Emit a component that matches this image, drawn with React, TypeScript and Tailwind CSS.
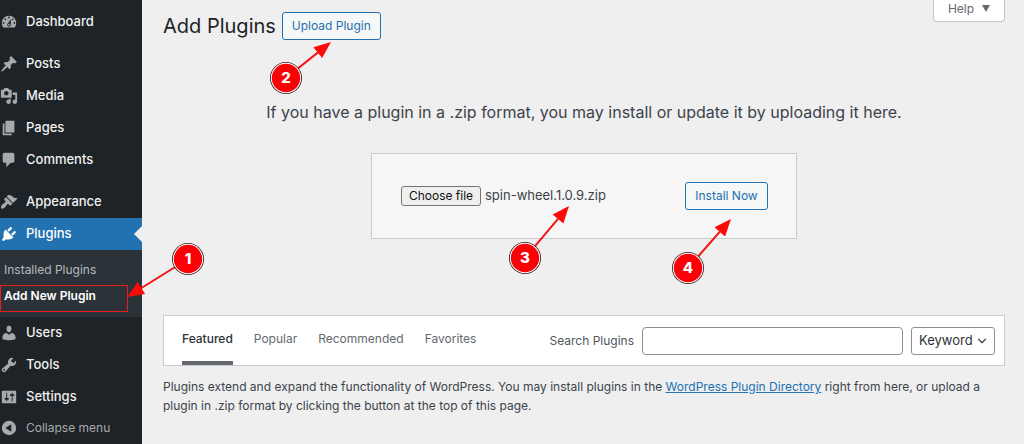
import React, { useRef, useState } from 'react';
import { ChevronDown } from 'lucide-react';

const ICONS = {
  dashboard: 'M3.76 16h12.48c1.1-1.37 1.76-3.11 1.76-5 0-4.42-3.58-8-8-8s-8 3.58-8 8c0 1.89.66 3.63 1.76 5zM10 4c.55 0 1 .45 1 1s-.45 1-1 1-1-.45-1-1 .45-1 1-1zM6 6c.55 0 1 .45 1 1s-.45 1-1 1-1-.45-1-1 .45-1 1-1zm8 0c.55 0 1 .45 1 1s-.45 1-1 1-1-.45-1-1 .45-1 1-1zm-5.37 5.55L12 7v6c0 1.1-.9 2-2 2s-2-.9-2-2c0-.57.24-1.08.63-1.45zM4 10c.55 0 1 .45 1 1s-.45 1-1 1-1-.45-1-1 .45-1 1-1zm12 0c.55 0 1 .45 1 1s-.45 1-1 1-1-.45-1-1 .45-1 1-1zm-5 3c0-.55-.45-1-1-1s-1 .45-1 1 .45 1 1 1 1-.45 1-1z',
  posts: 'M10.44 3.02l1.82-1.82 6.36 6.35-1.83 1.82c-1.05-.68-2.48-.57-3.41.36l-.75.75c-.92.93-1.04 2.35-.35 3.41l-1.83 1.82-2.41-2.41-2.8 2.79c-.42.42-3.38 2.71-3.8 2.29s1.86-3.39 2.28-3.81l2.79-2.79L4.1 9.36l1.83-1.82c1.05.69 2.48.57 3.4-.36l.75-.75c.93-.92 1.05-2.35.36-3.41z',
  media: 'M13 11V4c0-.55-.45-1-1-1h-1.67L9 1H5L3.67 3H2c-.55 0-1 .45-1 1v7c0 .55.45 1 1 1h10c.55 0 1-.45 1-1zM7 4.5c1.38 0 2.5 1.12 2.5 2.5S8.38 9.5 7 9.5 4.5 8.38 4.5 7 5.62 4.5 7 4.5zM14 6h5v10.5c0 1.38-1.12 2.5-2.5 2.5S14 17.88 14 16.5s1.12-2.5 2.5-2.5c.17 0 .34.02.5.05V9h-3V6zm-4 8.05V13h2v3.5c0 1.38-1.12 2.5-2.5 2.5S7 17.88 7 16.5 8.12 14 9.5 14c.17 0 .34.02.5.05z',
  pages: 'M6 15V2h10v13H6zm-1 1h8v2H3V5h2v11z',
  comments: 'M5 2h9c1.1 0 2 .9 2 2v7c0 1.1-.9 2-2 2h-2l-5 5v-5H5c-1.1 0-2-.9-2-2V4c0-1.1.9-2 2-2z',
  appearance: 'M14.48 11.06L7.41 3.99l1.5-1.5c.5-.56 2.3-.47 3.51.32 1.21.8 1.43 1.28 2.91 2.1 1.18.64 2.45 1.26 4.45.85zm-.71.71L6.7 4.7 4.93 6.47c-.39.39-.39 1.02 0 1.41l1.06 1.06c.39.39.39 1.03 0 1.42-.6.6-1.43 1.11-2.21 1.69-.35.26-.7.53-1.01.84C1.43 14.23.4 16.08 1.4 17.07c.99 1 2.84-.03 4.18-1.36.31-.31.58-.66.85-1.02.57-.78 1.08-1.61 1.69-2.21.39-.39 1.02-.39 1.41 0l1.06 1.06c.39.39 1.02.39 1.41 0z',
  plugins: 'M13.11 4.36L9.87 7.6 8 5.73l3.24-3.24c.35-.34 1.05-.2 1.56.32.52.51.66 1.21.31 1.55zm-8 1.77l.91-1.12 9.01 9.01-1.19.84c-.71.71-2.63 1.16-3.82 1.16H6.14L4.9 17.26c-.59.59-1.54.59-2.12 0-.59-.58-.59-1.53 0-2.12l1.24-1.24v-3.88c0-1.13.4-3.19 1.09-3.89zm7.26 3.97l3.24-3.24c.34-.35 1.04-.21 1.55.31.52.51.66 1.21.31 1.55l-3.24 3.25z',
  users: 'M10 9.25c-2.27 0-2.73-3.44-2.73-3.44C7 4.02 7.82 2 9.97 2c2.16 0 2.98 2.02 2.71 3.81 0 0-.41 3.44-2.68 3.44zm0 2.57L12.72 10c2.39 0 4.52 2.33 4.52 4.53v2.49s-3.65 1.13-7.24 1.13c-3.65 0-7.24-1.13-7.24-1.13v-2.49c0-2.25 1.94-4.48 4.47-4.48z',
  tools: 'M16.68 9.77c-1.34 1.34-3.3 1.67-4.95.99l-5.41 6.52c-.99.99-2.59.99-3.58 0s-.99-2.59 0-3.57l6.52-5.42c-.68-1.65-.35-3.61.99-4.95 1.28-1.28 3.12-1.62 4.72-1.06l-2.89 2.89 2.82 2.82 2.86-2.87c.53 1.58.18 3.39-1.08 4.65zM3.81 16.21c.4.39 1.04.39 1.43 0 .4-.4.4-1.04 0-1.43-.39-.4-1.03-.4-1.43 0-.39.39-.39 1.03 0 1.43z',
  settings: 'M18 16V4c0-.55-.45-1-1-1H3c-.55 0-1 .45-1 1v12c0 .55.45 1 1 1h14c.55 0 1-.45 1-1zM8 11h1c.55 0 1 .45 1 1s-.45 1-1 1H8v1.5c0 .28-.22.5-.5.5s-.5-.22-.5-.5V13H6c-.55 0-1-.45-1-1s.45-1 1-1h1V5.5c0-.28.22-.5.5-.5s.5.22.5.5V11zm5-2h-1c-.55 0-1-.45-1-1s.45-1 1-1h1V5.5c0-.28.22-.5.5-.5s.5.22.5.5V7h1c.55 0 1 .45 1 1s-.45 1-1 1h-1v5.5c0 .28-.22.5-.5.5s-.5-.22-.5-.5V9z',
  collapse: 'M10 2a8 8 0 1 0 0 16 8 8 0 0 0 0-16zm2.5 3.8v8.4L6 10z',
};

type IconName = keyof typeof ICONS;

const MENU_GROUPS: { id: IconName; label: string }[][] = [
  [{ id: 'dashboard', label: 'Dashboard' }],
  [
    { id: 'posts', label: 'Posts' },
    { id: 'media', label: 'Media' },
    { id: 'pages', label: 'Pages' },
    { id: 'comments', label: 'Comments' },
  ],
  [
    { id: 'appearance', label: 'Appearance' },
    { id: 'plugins', label: 'Plugins' },
    { id: 'users', label: 'Users' },
    { id: 'tools', label: 'Tools' },
    { id: 'settings', label: 'Settings' },
  ],
];

const TABS = ['Featured', 'Popular', 'Recommended', 'Favorites'];

const MenuIcon: React.FC<{ name: IconName }> = ({ name }) => (
  <svg viewBox="0 0 20 20" className="size-[18px] shrink-0" fill="currentColor" fillRule="evenodd" aria-hidden="true">
    <path d={ICONS[name]} />
  </svg>
);

// Numbered marker. The svg origin is the arrow tip, (dx, dy) is the centre of the disc.
const Callout: React.FC<{ n: number; dx: number; dy: number; className: string }> = ({ n, dx, dy, className }) => {
  const len = Math.hypot(dx, dy);
  const ux = dx / len;
  const uy = dy / len;
  const bx = ux * 17;
  const by = uy * 17;
  return (
    <svg width="1" height="1" className={`pointer-events-none absolute z-10 overflow-visible ${className}`}>
      <line x1={bx} y1={by} x2={dx} y2={dy} stroke="#f41414" strokeWidth="2" />
      <polygon points={`0,0 ${bx - uy * 7},${by + ux * 7} ${bx + uy * 7},${by - ux * 7}`} fill="#fb0a0a" />
      <circle cx={dx} cy={dy} r="16" fill="#3a1414" />
      <circle cx={dx} cy={dy} r="15.2" fill="#fff" />
      <circle cx={dx} cy={dy} r="14.2" fill="#fb0007" />
      <text x={dx} y={dy + 5} textAnchor="middle" fill="#fff" className="text-[15px] font-extrabold">{n}</text>
    </svg>
  );
};

const PluginsSubmenu: React.FC = () => (
  <ul className="bg-[#2c3338] pt-[7px] pb-2 text-xs">
    <li className="flex h-[26px] items-center pl-1">
      <a href="#installed" className="font-normal text-[#b4b9be]">Installed Plugins</a>
    </li>
    <li className="relative flex h-[26px] items-center pl-1">
      <a href="#add-new" className="font-semibold text-white">Add New Plugin</a>
      <span className="absolute top-0.5 left-0 h-[27px] w-32 border border-[#ec1c1c]" />
      <Callout n={1} dx={61} dy={-38} className="top-[14px] left-[127px]" />
    </li>
  </ul>
);

const Sidebar: React.FC = () => (
  <nav className="w-[142px] shrink-0 bg-[#1d2327] pt-1.5 text-[13px] font-medium text-[#f0f0f1]">
    <div className="space-y-2.5">
      {MENU_GROUPS.map(group => (
        <ul key={group[0].id}>
          {group.map(item => {
            const active = item.id === 'plugins';
            return (
              <li key={item.id}>
                <a
                  href={`#${item.id}`}
                  className={`relative flex h-8 items-center gap-2 ${active ? 'bg-[#2271b1] text-white' : ''}`}
                >
                  <span className={active ? 'text-white' : 'text-[#a7aaad]'}>
                    <MenuIcon name={item.id} />
                  </span>
                  {item.label}
                  {active && (
                    <span className="absolute top-2 right-0 border-y-8 border-r-8 border-y-transparent border-r-[#efeff0]" />
                  )}
                </a>
                {active && <PluginsSubmenu />}
              </li>
            );
          })}
        </ul>
      ))}
    </div>
    <button type="button" className="flex h-[30px] w-full items-center gap-2 text-xs font-normal text-[#a7aaad]">
      <MenuIcon name="collapse" />
      Collapse menu
    </button>
  </nav>
);

const UploadForm: React.FC = () => {
  const fileInput = useRef<HTMLInputElement>(null);
  const [fileName, setFileName] = useState('spin-wheel.1.0.9.zip');

  return (
    <form
      className="mx-auto mt-7 flex h-[86px] w-full max-w-[426px] items-center justify-between border border-[#c9cacd] bg-[#f6f6f6] px-7"
      onSubmit={e => e.preventDefault()}
    >
      <div className="relative flex items-center gap-1 pl-px text-[13px] text-[#3c434a]">
        <input
          ref={fileInput}
          type="file"
          accept=".zip"
          aria-label="Plugin zip file"
          className="hidden"
          onChange={e => setFileName(e.target.files?.[0]?.name ?? '')}
        />
        <button
          type="button"
          onClick={() => fileInput.current?.click()}
          className="h-5 w-20 rounded-[3px] border border-[#767676] bg-[#efefef] text-xs leading-none text-[#111]"
        >
          Choose file
        </button>
        <span>{fileName}</span>
        <Callout n={3} dx={-44} dy={52} className="top-[20px] left-[169px]" />
      </div>
      <div className="relative">
        <button type="submit" className="block h-7 w-[83px] rounded-[3px] border border-[#2271b1] bg-[#f6f7f7] text-xs text-[#2271b1]">
          Install Now
        </button>
        <Callout n={4} dx={-43} dy={49} className="top-[37px] left-[46px]" />
      </div>
    </form>
  );
};

const FilterBar: React.FC = () => {
  const [tab, setTab] = useState('Featured');

  return (
    <div className="mt-[76px] flex h-[51px] items-center justify-between border border-[#c9cacd] bg-white pr-[9px] pl-[18px] text-xs">
      <div className="flex h-full gap-[21px]">
        {TABS.map(name => (
          <button
            key={name}
            type="button"
            onClick={() => setTab(name)}
            className={`h-full border-b-4 ${tab === name ? 'border-[#646970] font-medium text-[#2c3338]' : 'border-transparent text-[#646970]'}`}
          >
            {name}
          </button>
        ))}
      </div>
      <div className="flex items-center gap-2">
        <label htmlFor="plugin-search" className="text-[#50575e]">Search Plugins</label>
        <input id="plugin-search" type="search" className="h-7 w-[261px] rounded-[4px] border border-[#8c8f94] bg-white px-2" />
        <div className="relative">
          <select
            aria-label="Search by"
            className="h-7 w-[84px] appearance-none rounded-[3px] border border-[#8c8f94] bg-white pl-[7px] text-[13px] text-[#2c3338]"
          >
            <option>Keyword</option>
            <option>Author</option>
            <option>Tag</option>
          </select>
          <ChevronDown size={14} className="pointer-events-none absolute top-[7px] right-1.5 text-[#3c434a]" />
        </div>
      </div>
    </div>
  );
};

const App: React.FC = () => (
  <div className="flex min-h-screen bg-[#efeff0] font-['Inter','Liberation_Sans',sans-serif]">
    <Sidebar />

    <main className="min-w-0 flex-1 pr-[19px] pl-[21px] text-[#3c434a]">
      {/* Title row and help tab */}
      <div className="flex items-start justify-between">
        <div className="flex items-center gap-1.5 pt-3">
          <h1 className="text-xl leading-7 text-[#1d2327]">Add Plugins</h1>
          <div className="relative">
            <button type="button" className="block h-7 w-[99px] rounded-[3px] border border-[#2271b1] bg-[#f6f7f7] text-xs text-[#2271b1]">
              Upload Plugin
            </button>
            <Callout n={2} dx={-45} dy={36} className="top-[30px] left-[49px]" />
          </div>
        </div>
        <button
          type="button"
          className="flex h-[22px] w-[72px] items-center justify-center gap-2 rounded-b-[4px] border border-t-0 border-[#c3c4c7] bg-white pb-1 text-xs text-[#646970]"
        >
          Help
          <svg width="8" height="7" viewBox="0 0 8 7" fill="currentColor" aria-hidden="true">
            <path d="M0 0h8L4 7z" />
          </svg>
        </button>
      </div>

      <p className="mt-[59px] text-center text-base leading-[26px]">
        If you have a plugin in a .zip format, you may install or update it by uploading it here.
      </p>

      <UploadForm />
      <FilterBar />

      <p className="mt-[11px] text-xs leading-[19px]">
        Plugins extend and expand the functionality of WordPress. You may install plugins in the{' '}
        <a href="#directory" className="text-[#2271b1] underline">WordPress Plugin Directory</a> right from here, or upload a
        plugin in .zip format by clicking the button at the top of this page.
      </p>
    </main>
  </div>
);

export default App;
